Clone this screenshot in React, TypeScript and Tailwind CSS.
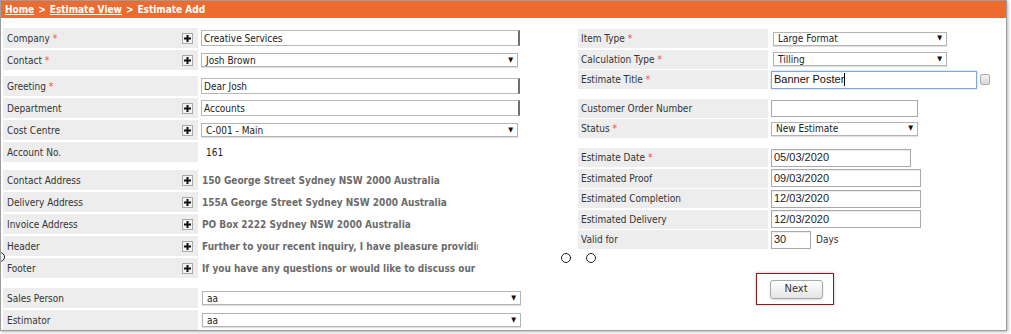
import React from "react";

const FONT = "font-['DejaVu_Sans_Condensed','DejaVu_Sans',sans-serif]";

function Req() {
  return <span className="text-[#ee4b4b]"> *</span>;
}

function Plus() {
  return (
    <div className="ml-auto w-[11px] h-[11px] bg-[#f3f3f3] border border-[#a8a8a8] flex items-center justify-center">
      <svg width="7" height="7" viewBox="0 0 7 7">
        <rect x="0" y="2.5" width="7" height="2" fill="#111" />
        <rect x="2.5" y="0" width="2" height="7" fill="#111" />
      </svg>
    </div>
  );
}

function LeftRow({ label, req, plus, children }: { label: string; req?: boolean; plus?: boolean; children?: React.ReactNode }) {
  return (
    <div className="flex h-[20px]">
      <div className="w-[195px] h-full bg-[#ededed] flex items-center pl-[4px] pr-[5px] text-[#333]">
        <span>
          {label}
          {req && <Req />}
        </span>
        {plus && <Plus />}
      </div>
      <div className="ml-[3px] w-[320px] flex items-center overflow-hidden">{children}</div>
    </div>
  );
}

function RightRow({ label, req, children }: { label: string; req?: boolean; children?: React.ReactNode }) {
  return (
    <div className="flex h-[19px]">
      <div className="w-[190px] h-full bg-[#ededed] flex items-center pl-[3px] text-[#333]">
        <span>
          {label}
          {req && <Req />}
        </span>
      </div>
      <div className="ml-[3px] flex-1 flex items-center">{children}</div>
    </div>
  );
}

function TextBox({ value, w }: { value: string; w: string }) {
  return (
    <div className={`${w} h-[16px] border border-[#b8b8b8] border-r-2 border-r-[#707070] bg-white flex items-center pl-[2px] text-[#222]`}>
      {value}
    </div>
  );
}

function Select({ value, w, ml }: { value: string; w: string; ml?: string }) {
  return (
    <div className={`${w} ${ml ?? ""} h-[14px] border border-[#b4b4b4] bg-white shadow-[0_1px_1px_rgba(0,0,0,0.12)] flex items-center pl-[4px] pr-[4px] text-[#222]`}>
      <span>{value}</span>
      <span className="ml-auto text-[7px] leading-none text-[#111]">▼</span>
    </div>
  );
}

function DateBox({ value, w }: { value: string; w: string }) {
  return (
    <div className={`${w} h-[18px] border border-[#a9a9a9] shadow-[inset_0_1px_1px_rgba(0,0,0,0.08)] bg-white flex items-center pl-[2px] font-['Liberation_Sans',sans-serif] text-[11px] text-[#222]`}>
      {value}
    </div>
  );
}

function Addr({ text }: { text: string }) {
  return <div className="w-[277px] pl-[1px] whitespace-nowrap overflow-hidden font-bold text-[#6b6b6b]">{text}</div>;
}

function Circle() {
  return <div className="w-[10px] h-[10px] rounded-full border border-[#222]" />;
}

export default function App() {
  return (
    <div className={`w-[1011px] h-[334px] bg-white overflow-hidden text-[10px] ${FONT}`}>
      <div className="relative w-[1007px] h-[331px] border border-[#9c9c9c] shadow-[1px_1px_3px_rgba(0,0,0,0.3)] overflow-hidden">
        {/* breadcrumb bar */}
        <div className="h-[17px] bg-[#ee6b2f] flex items-center pl-[4px] text-white font-bold text-[10px]">
          <span className="underline">Home</span>
          <span className="mx-[4px]">&gt;</span>
          <span className="underline">Estimate View</span>
          <span className="mx-[4px]">&gt;</span>
          <span>Estimate Add</span>
        </div>

        {/* stray radio on the left edge */}
        <div className="absolute left-[-6px] top-[251px] w-[10px] h-[10px] rounded-full border border-[#222]" />

        <div className="flex pt-[10px] pl-[2px]">
          {/* left column */}
          <div className="w-[518px] flex flex-col">
            <div className="flex flex-col gap-[2px]">
              <LeftRow label="Company" req plus>
                <TextBox value="Creative Services" w="w-[319px]" />
              </LeftRow>
              <LeftRow label="Contact" req plus>
                <Select value="Josh Brown" w="w-[317px]" />
              </LeftRow>
            </div>
            <div className="flex flex-col gap-[2px] mt-[6px]">
              <LeftRow label="Greeting" req>
                <TextBox value="Dear Josh" w="w-[319px]" />
              </LeftRow>
              <LeftRow label="Department" plus>
                <TextBox value="Accounts" w="w-[319px]" />
              </LeftRow>
              <LeftRow label="Cost Centre" plus>
                <Select value="C-001 - Main" w="w-[317px]" />
              </LeftRow>
              <LeftRow label="Account No.">
                <span className="pl-[5px] text-[#222]">161</span>
              </LeftRow>
            </div>
            <div className="flex flex-col gap-[2px] mt-[8px]">
              <LeftRow label="Contact Address" plus>
                <Addr text="150 George Street Sydney NSW 2000 Australia" />
              </LeftRow>
              <LeftRow label="Delivery Address" plus>
                <Addr text="155A George Street Sydney NSW 2000 Australia" />
              </LeftRow>
              <LeftRow label="Invoice Address" plus>
                <Addr text="PO Box 2222 Sydney NSW 2000 Australia" />
              </LeftRow>
              <LeftRow label="Header" plus>
                <Addr text="Further to your recent inquiry, I have pleasure providing the following estimate" />
              </LeftRow>
              <LeftRow label="Footer" plus>
                <Addr text="If you have any questions or would like to discuss our estimate" />
              </LeftRow>
            </div>
            <div className="flex flex-col gap-[2px] mt-[10px]">
              <LeftRow label="Sales Person">
                <Select value="aa" w="w-[319px]" ml="ml-[1px]" />
              </LeftRow>
              <LeftRow label="Estimator">
                <Select value="aa" w="w-[319px]" ml="ml-[1px]" />
              </LeftRow>
            </div>
          </div>

          {/* right column */}
          <div className="ml-[57px] pt-[1px] w-[420px] flex flex-col">
            <div className="flex flex-col gap-[1.5px]">
              <RightRow label="Item Type" req>
                <Select value="Large Format" w="w-[174px]" ml="ml-[2px]" />
              </RightRow>
              <RightRow label="Calculation Type" req>
                <Select value="Tilling" w="w-[174px]" ml="ml-[2px]" />
              </RightRow>
              <RightRow label="Estimate Title" req>
                <div className="w-[206px] h-[18px] border border-[#7fa8de] shadow-[0_0_2px_rgba(80,140,220,0.5)] bg-white flex items-center pl-[2px] font-['Liberation_Sans',sans-serif] text-[11px] text-[#111]">
                  Banner Poster
                  <span className="w-px h-[13px] bg-black" />
                </div>
                <div className="ml-[3px] w-[10px] h-[11px] rounded-[2px] border border-[#aaa] bg-gradient-to-b from-[#f4f4f4] to-[#d8d8d8]" />
              </RightRow>
            </div>
            <div className="flex flex-col gap-[1.5px] mt-[9.5px]">
              <RightRow label="Customer Order Number">
                <div className="w-[147px] h-[17px] border border-[#a9a9a9] bg-white" />
              </RightRow>
              <RightRow label="Status" req>
                <Select value="New Estimate" w="w-[147px]" />
              </RightRow>
            </div>
            <div className="flex flex-col gap-[1.5px] mt-[10px]">
              <RightRow label="Estimate Date" req>
                <DateBox value="05/03/2020" w="w-[140px]" />
              </RightRow>
              <RightRow label="Estimated Proof">
                <DateBox value="09/03/2020" w="w-[150px]" />
              </RightRow>
              <RightRow label="Estimated Completion">
                <DateBox value="12/03/2020" w="w-[150px]" />
              </RightRow>
              <RightRow label="Estimated Delivery">
                <DateBox value="12/03/2020" w="w-[150px]" />
              </RightRow>
              <RightRow label="Valid for">
                <DateBox value="30" w="w-[40px]" />
                <span className="ml-[5px] text-[#333]">Days</span>
              </RightRow>
            </div>
            <div className="flex gap-[15px] ml-[-17px] mt-[4px]">
              <Circle />
              <Circle />
            </div>
            <div className="ml-[178px] mt-[10px] w-[78px] h-[32px] border border-[#8b1c1c] shadow-[0_0_3px_rgba(0,0,0,0.25)] flex items-center justify-center">
              <button className="w-[53px] h-[19px] rounded-[3px] border border-[#a8a8a8] bg-gradient-to-b from-white to-[#e4e4e4] shadow-[0_1px_2px_rgba(0,0,0,0.15)] text-[11px] text-[#333] ml-[2px]">
                Next
              </button>
            </div>
          </div>
        </div>
      </div>
    </div>
  );
}
